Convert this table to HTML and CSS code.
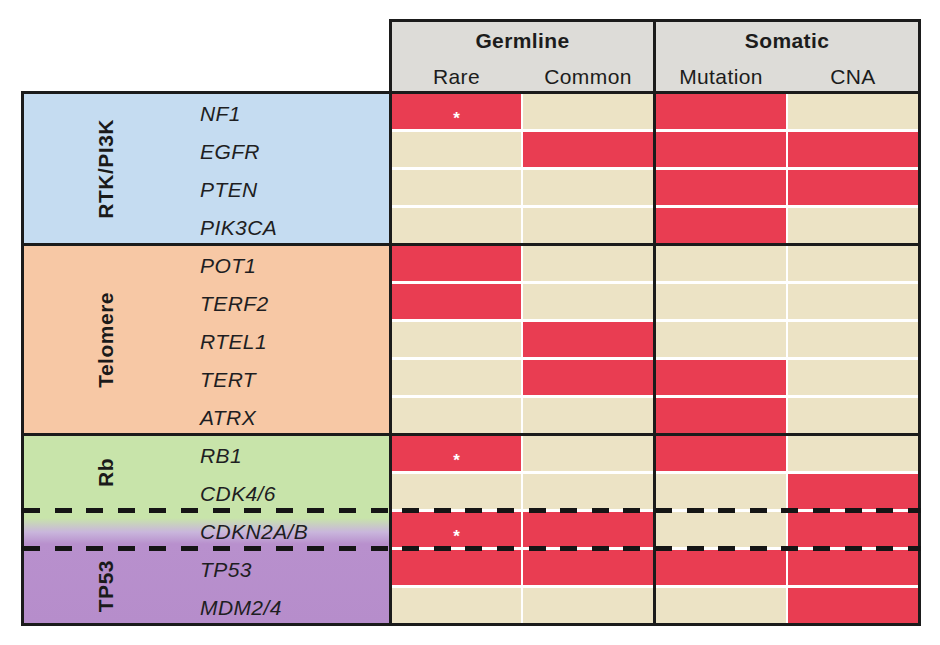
FILE: index.html
```html
<!DOCTYPE html>
<html lang="en">
<head>
<meta charset="utf-8">
<title>Germline and somatic alterations</title>
<link rel="stylesheet" href="styles.css">
</head>
<body>
<div class="chart">
  <div class="head">
    <div class="hgroup germ">
      <div class="htitle">Germline</div>
      <div class="hsubs"><span>Rare</span><span>Common</span></div>
    </div>
    <div class="hgroup som">
      <div class="htitle">Somatic</div>
      <div class="hsubs"><span>Mutation</span><span>CNA</span></div>
    </div>
  </div>
  <div class="body">
    <section class="group rtk">
      <div class="side">
        <div class="labels g4"><div class="label all"><span>RTK/PI3K</span></div></div>
        <div class="genes"><i>NF1</i><i>EGFR</i><i>PTEN</i><i>PIK3CA</i></div>
      </div>
      <div class="data">
        <div class="half germ">
          <div class="c r star">*</div><div class="c"></div>
          <div class="c"></div><div class="c r"></div>
          <div class="c"></div><div class="c"></div>
          <div class="c"></div><div class="c"></div>
        </div>
        <div class="half som">
          <div class="c r"></div><div class="c"></div>
          <div class="c r"></div><div class="c r"></div>
          <div class="c r"></div><div class="c r"></div>
          <div class="c r"></div><div class="c"></div>
        </div>
      </div>
    </section>
    <section class="group telo">
      <div class="side">
        <div class="labels g5"><div class="label all"><span>Telomere</span></div></div>
        <div class="genes"><i>POT1</i><i>TERF2</i><i>RTEL1</i><i>TERT</i><i>ATRX</i></div>
      </div>
      <div class="data">
        <div class="half germ">
          <div class="c r"></div><div class="c"></div>
          <div class="c r"></div><div class="c"></div>
          <div class="c"></div><div class="c r"></div>
          <div class="c"></div><div class="c r"></div>
          <div class="c"></div><div class="c"></div>
        </div>
        <div class="half som">
          <div class="c"></div><div class="c"></div>
          <div class="c"></div><div class="c"></div>
          <div class="c"></div><div class="c"></div>
          <div class="c r"></div><div class="c"></div>
          <div class="c r"></div><div class="c"></div>
        </div>
      </div>
    </section>
    <section class="group lower">
      <div class="side">
        <div class="labels g5">
          <div class="label rb"><span>Rb</span></div>
          <div class="label tp"><span>TP53</span></div>
        </div>
        <div class="genes"><i>RB1</i><i>CDK4/6</i><i>CDKN2A/B</i><i>TP53</i><i>MDM2/4</i></div>
      </div>
      <div class="data">
        <div class="half germ">
          <div class="c r star">*</div><div class="c"></div>
          <div class="c"></div><div class="c"></div>
          <div class="c r star">*</div><div class="c r"></div>
          <div class="c r"></div><div class="c r"></div>
          <div class="c"></div><div class="c"></div>
        </div>
        <div class="half som">
          <div class="c r"></div><div class="c"></div>
          <div class="c"></div><div class="c r"></div>
          <div class="c"></div><div class="c r"></div>
          <div class="c r"></div><div class="c r"></div>
          <div class="c"></div><div class="c r"></div>
        </div>
      </div>
      <div class="dash d1"></div>
      <div class="dash d2"></div>
    </section>
  </div>
</div>
</body>
</html>
```
FILE: styles.css
```css
body {
  margin: 0;
  background: #ffffff;
  font-family: "Liberation Sans", Arial, sans-serif;
  color: #1c1c1c;
}

.chart {
  margin: 19px 0 0 21px;
  width: 900px;
}

/* ---------- header ---------- */
.head {
  margin-left: 368px;
  width: 532px;
  height: 72px;
  box-sizing: border-box;
  border: 3px solid #1b1b1b;
  border-bottom: 0;
  background: #dddcd8;
  display: flex;
}

.hgroup {
  width: 261px;
  display: flex;
  flex-direction: column;
}

.hgroup.som {
  width: 262px;
  border-left: 3px solid #1b1b1b;
}

.htitle {
  height: 38px;
  line-height: 38px;
  text-align: center;
  font-weight: bold;
  font-size: 21px;
  letter-spacing: 0.4px;
}

.hsubs {
  display: grid;
  grid-template-columns: 129px 130px;
  column-gap: 2px;
  padding-top: 2px;
  line-height: 30px;
  font-size: 21px;
  letter-spacing: 0.4px;
  text-align: center;
}

.som .hsubs {
  grid-template-columns: 130px 130px;
}

/* ---------- body ---------- */
.body {
  border: 3px solid #1b1b1b;
}

.group {
  display: flex;
  position: relative;
}

.group + .group {
  border-top: 3px solid #1b1b1b;
}

.side {
  width: 365px;
  display: flex;
}

.rtk .side { background: #c5dcf1; }
.telo .side { background: #f7c8a5; }
.lower .side {
  background: linear-gradient(to bottom, #c8e4aa 0, #c8e4aa 82px, #c9b6dc 96px, #b890cd 108px, #b68dcb 100%);
}

.labels {
  width: 163px;
  display: grid;
  row-gap: 3px;
}

.labels.g4 { grid-template-rows: repeat(4, 35px); }
.labels.g5 { grid-template-rows: repeat(5, 35px); }

.label {
  display: flex;
  align-items: center;
  justify-content: center;
}

.label.all { grid-row: 1 / -1; }
.label.rb { grid-row: 1 / 3; }
.label.tp { grid-row: 4 / 6; }

.label span {
  writing-mode: vertical-rl;
  transform: rotate(180deg);
  font-weight: bold;
  font-size: 21px;
  letter-spacing: 0.5px;
  color: #1a1a1a;
}

.genes {
  display: grid;
  grid-auto-rows: 35px;
  row-gap: 3px;
  padding-left: 13px;
}

.genes i {
  height: 35px;
  box-sizing: border-box;
  padding-top: 5px;
  line-height: 30px;
  font-size: 21px;
  letter-spacing: 0.4px;
  color: #1e1e22;
}

.data {
  display: flex;
  border-left: 3px solid #1b1b1b;
}

.half {
  display: grid;
  grid-template-columns: 129px 130px;
  grid-auto-rows: 35px;
  gap: 3px 2px;
  background: #ffffff;
}

.half.som {
  grid-template-columns: 130px 130px;
  border-left: 3px solid #1b1b1b;
}

.c { background: #ece3c5; }
.c.r { background: #e93d52; }

.c.star {
  box-sizing: border-box;
  padding-top: 16px;
  display: flex;
  justify-content: center;
  color: #ffffff;
  font-weight: bold;
  font-size: 17px;
  line-height: 1;
}

/* dashed separators drawn over the lower group */
.dash {
  position: absolute;
  left: -3px;
  right: -3px;
  height: 5px;
  background: repeating-linear-gradient(to right, #151515 0, #151515 17px, transparent 17px, transparent 31.6px);
  background-position: 2px 0;
}

.dash.d1 { top: 72px; }
.dash.d2 { top: 110px; }
```
